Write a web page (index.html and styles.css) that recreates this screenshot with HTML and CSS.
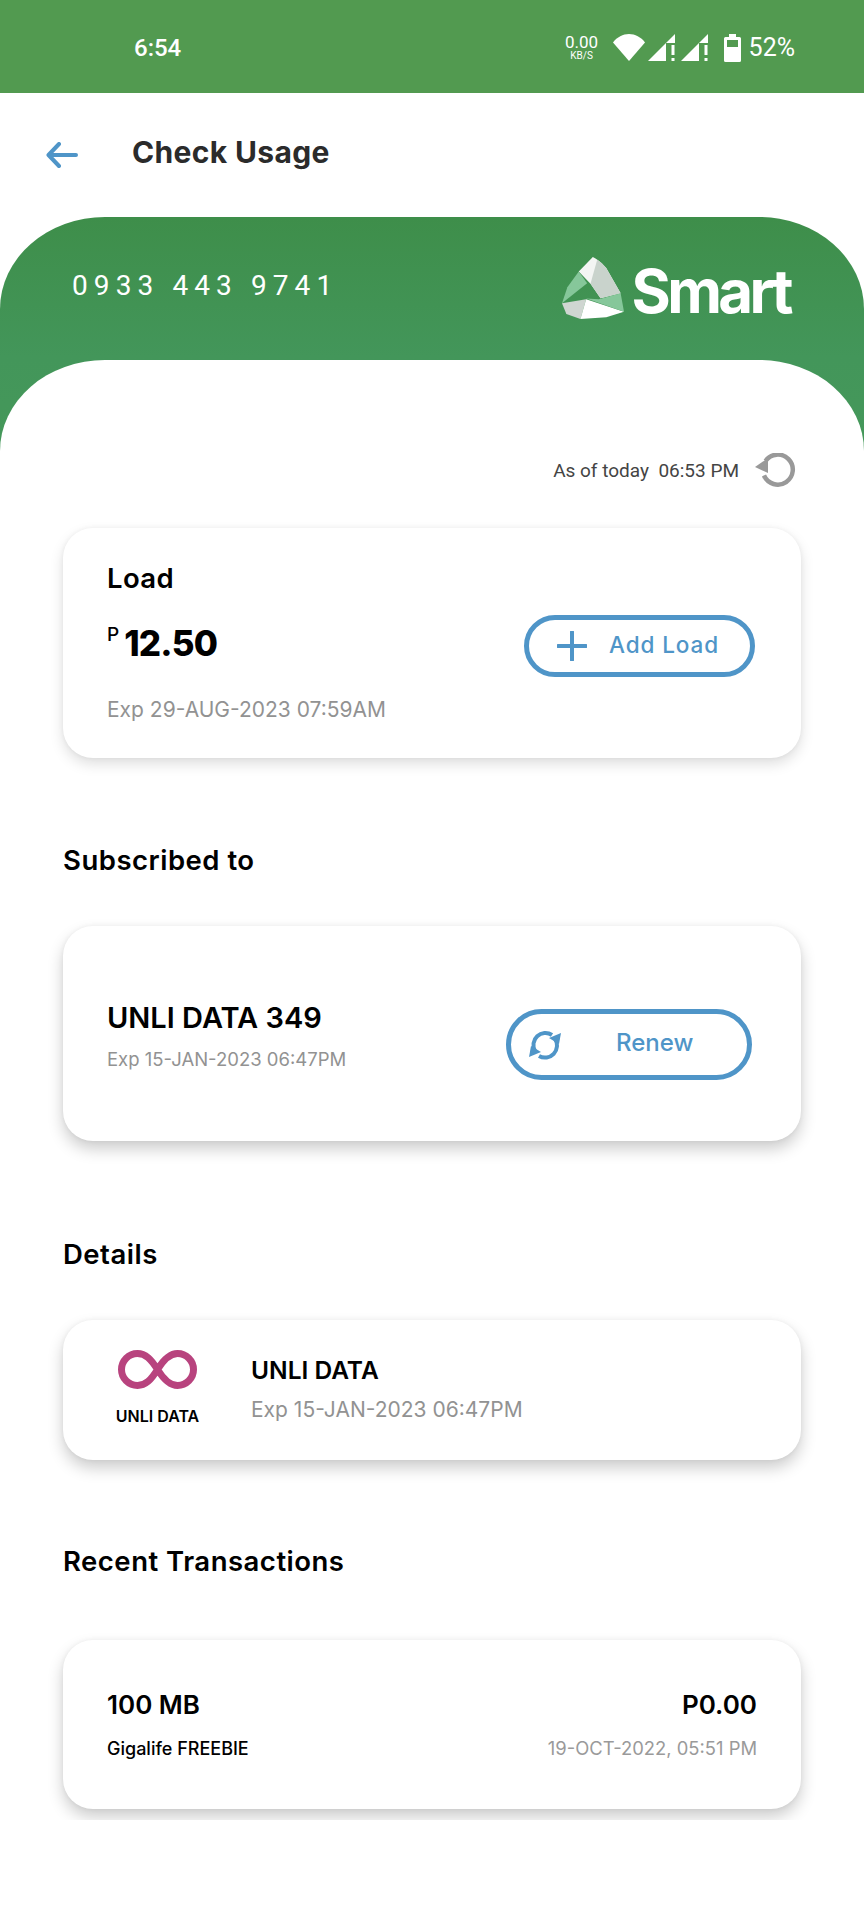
FILE: index.html
```html
<!DOCTYPE html>
<html lang="en">
<head>
<meta charset="utf-8">
<title>Check Usage</title>
<link rel="stylesheet" href="styles.css">
</head>
<body>
<div class="status">
  <span class="clock">6:54</span>
  <div class="status-right">
    <div class="speed"><span class="speed-num">0.00</span><span class="speed-unit">KB/S</span></div>
    <svg class="ic-wifi" width="32" height="27" viewBox="0 0 32 27"><path d="M0 8.500C4 3 10 0 16 0s12 3 16 8.500L16 27z" fill="#fff"/></svg>
    <svg class="ic-sig" width="28" height="27" viewBox="0 0 28 27"><path d="M0 27L18 9v18z" fill="#fff"/><path d="M18 9L27 0v9z" fill="#fff"/><rect x="23.500" y="11" width="3" height="10" fill="#fff"/><rect x="23.500" y="24" width="3" height="3" fill="#fff"/></svg>
    <svg class="ic-sig" width="28" height="27" viewBox="0 0 28 27"><path d="M0 27L18 9v18z" fill="#fff"/><path d="M18 9L27 0v9z" fill="#fff"/><rect x="23.500" y="11" width="3" height="10" fill="#fff"/><rect x="23.500" y="24" width="3" height="3" fill="#fff"/></svg>
    <svg class="ic-batt" width="17" height="28" viewBox="0 0 17 28"><path d="M5 0h7v3h3.500A1.500 1.500 0 0 1 17 4.500V26.500A1.500 1.500 0 0 1 15.500 28H1.500A1.500 1.500 0 0 1 0 26.500V4.500A1.500 1.500 0 0 1 1.500 3H5z" fill="#fff"/><rect x="3" y="6" width="11" height="7" fill="#529a50"/></svg>
    <span class="pct">52%</span>
  </div>
</div>

<header class="topbar">
  <svg class="back" width="32" height="26" viewBox="0 0 32 26"><path d="M13 2L2.500 13 13 24M3 13h27" fill="none" stroke="#4f95c8" stroke-width="4" stroke-linecap="round" stroke-linejoin="round"/></svg>
  <h1 class="title">Check Usage</h1>
</header>

<section class="banner">
  <div class="banner-top">
    <span class="msisdn">0933 443 9741</span>
    <div class="logo">
      <svg class="logo-mark" width="62" height="62" viewBox="130 52 185 185">
        <path d="M222 52L180 95 215 132 245 175 305 160 262 85Q240 60 222 52z" fill="#f3f5f3"/>
        <path d="M235 60Q250 68 262 85L305 160 245 175 215 132z" fill="#c9d3cc"/>
        <path d="M180 95L146 142 130 190 205 130z" fill="#86c79a"/>
        <path d="M130 190L143 222 185 237 202 178z" fill="#cfd6d1"/>
        <path d="M185 237L262 232 315 215 202 178z" fill="#fff"/>
        <path d="M202 176L315 215 305 160 240 178z" fill="#86c79a"/>
      </svg>
      <span class="wordmark">Smart</span>
    </div>
  </div>
  <div class="banner-curve"></div>
</section>

<main class="content">
  <div class="asof">
    <span class="asof-text">As of today &nbsp;06:53 PM</span>
    <svg width="42" height="35" viewBox="0 0 42 35"><path d="M10.500 8A15 15 0 1 1 9 22.500" fill="none" stroke="#999" stroke-width="4.500"/><path d="M0 14L13 5v15z" fill="#999"/></svg>
  </div>

  <div class="card card-load">
    <div class="load-left">
      <div class="load-label">Load</div>
      <div class="amount"><span class="peso">P</span><span class="amount-num">12.50</span></div>
      <div class="exp exp-load">Exp 29-AUG-2023 07:59AM</div>
    </div>
    <button class="btn btn-add">
      <svg width="30" height="30" viewBox="0 0 30 30"><path d="M15 1v28M1 15h28" stroke="#4f95c8" stroke-width="4" stroke-linecap="round"/></svg>
      <span class="btn-label">Add Load</span>
    </button>
  </div>

  <h2 class="sec sec-sub">Subscribed to</h2>
  <div class="card card-plan">
    <div class="plan-left">
      <div class="plan-name">UNLI DATA 349</div>
      <div class="exp exp-plan">Exp 15-JAN-2023 06:47PM</div>
    </div>
    <button class="btn btn-renew">
      <svg width="34" height="30" viewBox="0 0 34 30"><path d="M7 21A12 12 0 0 1 24 5" fill="none" stroke="#4f95c8" stroke-width="4"/><path d="M27 9A12 12 0 0 1 11 26" fill="none" stroke="#4f95c8" stroke-width="4"/><path d="M33 3L31 14 21 8z" fill="#4f95c8"/><path d="M1 27L3 16 13 22z" fill="#4f95c8"/></svg>
      <span class="btn-label">Renew</span>
    </button>
  </div>

  <h2 class="sec sec-det">Details</h2>
  <div class="card card-detail">
    <div class="badge">
      <svg width="79" height="41" viewBox="0 0 79 41"><path d="M39.500 20.500C33 10 27.500 4.500 19.500 4.500A16 16 0 0 0 19.500 36.500C27.500 36.500 33 31 39.500 20.500S52 4.500 59.500 4.500A16 16 0 0 1 59.500 36.500C52 36.500 46 31 39.500 20.500z" fill="none" stroke="#b8437e" stroke-width="7"/></svg>
      <span class="badge-text">UNLI DATA</span>
    </div>
    <div class="detail-text">
      <div class="detail-name">UNLI DATA</div>
      <div class="exp exp-detail">Exp 15-JAN-2023 06:47PM</div>
    </div>
  </div>

  <h2 class="sec sec-rec">Recent Transactions</h2>
  <div class="card card-tx">
    <div class="tx-row">
      <span class="tx-name">100 MB</span>
      <span class="tx-price">P0.00</span>
    </div>
    <div class="tx-row tx-row-sub">
      <span class="tx-source">Gigalife FREEBIE</span>
      <span class="tx-date">19-OCT-2022, 05:51 PM</span>
    </div>
  </div>
</main>
</body>
</html>
```
FILE: styles.css
```css
* { box-sizing: border-box; }
html, body { margin: 0; padding: 0; background: #fff; }
body { width: 864px; height: 1920px; overflow: hidden; font-family: Inter, "Liberation Sans", sans-serif; color: #000; }

.status { height: 93px; background: #529a50; display: flex; align-items: center; justify-content: space-between; padding: 2px 69px 0 134px; color: #fff; font-family: Roboto, sans-serif; }
.clock { font-size: 24px; font-weight: 500; }
.status-right { display: flex; align-items: center; }
.speed { display: flex; flex-direction: column; align-items: center; width: 34px; margin-right: 14px; }
.speed-num { font-size: 17px; line-height: 15px; }
.speed-unit { font-size: 10px; line-height: 11px; }
.ic-wifi { margin-right: 3px; }
.ic-sig { margin-right: 5px; }
.ic-batt { margin: 0 8px 0 10px; }
.pct { font-size: 25px; }

.topbar { height: 124px; display: flex; align-items: center; padding-left: 46px; gap: 54px; }
.title { margin: 0 0 7px; font-size: 30px; font-weight: 700; color: #2b2b2b; letter-spacing: .35px; }

.banner { height: 234px; border-radius: 105px 105px 0 0 / 92px 92px 0 0; background: linear-gradient(180deg, #3e8e4a 0%, #43965a 60%, #45985a 100%); display: flex; flex-direction: column; }
.banner-top { height: 143px; flex: none; display: flex; align-items: center; justify-content: space-between; padding: 0 74px 7px 72px; }
.msisdn { font-family: Roboto, sans-serif; font-size: 28px; color: #fff; letter-spacing: 6.100px; white-space: nowrap; }
.logo { display: flex; align-items: center; gap: 8px; margin-top: 6px; }
.wordmark { font-size: 60px; font-weight: 700; line-height: 62px; margin-top: 5px; color: #fff; letter-spacing: -3.600px; }
.banner-curve { flex: 1; background: #fff; border-radius: 105px 105px 0 0 / 91px 91px 0 0; }

.content { height: 1369px; overflow: hidden; padding: 0 63px; }
.asof { height: 37px; margin-top: 1px; display: flex; align-items: center; justify-content: flex-end; gap: 16px; padding-right: 4px; }
.asof-text { font-family: Roboto, sans-serif; font-size: 19px; color: #444; }

.card { background: #fff; border-radius: 30px; box-shadow: 0 8px 16px rgba(0,0,0,.2), 0 0 5px rgba(0,0,0,.05); display: flex; }
.exp { color: #929292; font-weight: 400; white-space: nowrap; }

.card-load { height: 230px; margin-top: 39px; padding: 32px 46px 31px 44px; justify-content: space-between; align-items: center; box-shadow: 0 6px 14px rgba(0,0,0,.13), 0 0 5px rgba(0,0,0,.05); }
.load-left { align-self: flex-start; }
.load-label { font-size: 27.500px; font-weight: 600; line-height: 36px; letter-spacing: .4px; }
.amount { display: flex; align-items: flex-start; gap: 5px; margin-top: 22px; height: 50px; }
.peso { font-size: 19px; font-weight: 500; line-height: 34px; }
.amount-num { font-size: 35px; font-weight: 800; line-height: 50px; letter-spacing: -.8px; }
.exp-load { font-size: 21px; line-height: 30px; margin-top: 27px; }

.btn { font-family: Inter, sans-serif; background: #fff; border: 5px solid #4f95c8; border-radius: 40px; color: #4f95c8; font-weight: 500; display: flex; align-items: center; padding: 0; }
.btn-label { margin-bottom: 4px; }
.btn-add { width: 231px; height: 62px; margin-top: 5px; font-size: 22.500px; letter-spacing: .9px; padding-left: 28px; gap: 22px; }
.btn-renew { width: 246px; height: 71px; margin-top: 22px; font-size: 24px; padding-left: 17px; gap: 54px; }

.sec { margin: 0; font-size: 27.500px; font-weight: 600; line-height: 36px; letter-spacing: .5px; }
.sec-sub { margin-top: 84px; }
.sec-det { margin-top: 95px; }
.sec-rec { margin-top: 83px; }

.card-plan { height: 215px; margin-top: 48px; padding: 0 49px 0 44px; align-items: center; justify-content: space-between; }
.plan-left { margin-top: 4px; }
.plan-name { font-size: 29px; font-weight: 600; line-height: 36px; }
.exp-plan { font-size: 18.500px; line-height: 26px; margin-top: 10px; }

.card-detail { height: 140px; margin-top: 48px; padding: 29px 0 0 53px; gap: 52px; }
.badge { width: 83px; display: flex; flex-direction: column; align-items: center; gap: 16px; }
.badge-text { font-size: 16px; font-weight: 600; line-height: 20px; white-space: nowrap; }
.detail-text { margin-top: 6px; }
.detail-name { font-size: 24.500px; font-weight: 600; line-height: 30px; }
.exp-detail { font-size: 21px; line-height: 30px; margin-top: 10px; }

.card-tx { height: 169px; margin-top: 61px; padding: 46px 44px 0 44px; flex-direction: column; }
.tx-row { display: flex; justify-content: space-between; align-items: center; height: 36px; }
.tx-row-sub { height: 26px; margin-top: 13px; }
.tx-name, .tx-price { font-size: 26px; font-weight: 600; }
.tx-source { font-size: 18px; font-weight: 500; }
.tx-date { font-size: 18.400px; color: #9a9a9a; }
```
